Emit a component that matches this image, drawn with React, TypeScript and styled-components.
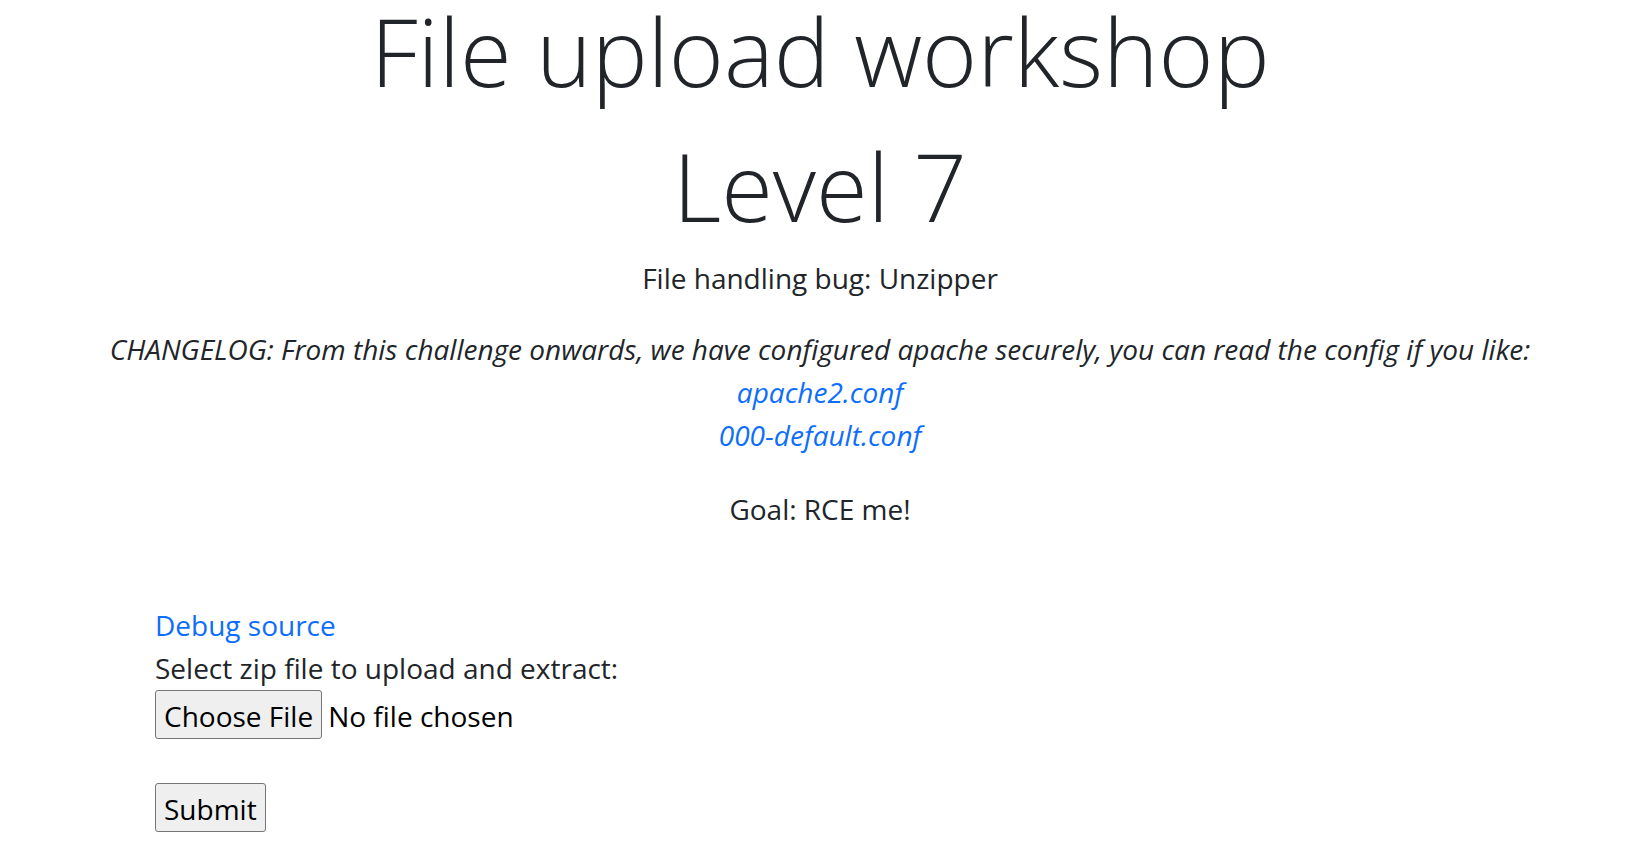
import React from "react";
import styled, { createGlobalStyle } from "styled-components";

const Global = createGlobalStyle`
  html, body { margin: 0; padding: 0; background: #fff; }
  body {
    font-family: "Open Sans", "Noto Sans", sans-serif;
    font-size: 28px;
    line-height: 43px;
    color: #212529;
  }
`;

const Page = styled.main`
  display: flex;
  flex-direction: column;
  padding-top: 4px;
`;

const Header = styled.header`
  display: flex;
  flex-direction: column;
  align-items: center;
  text-align: center;
`;

const Title = styled.h1`
  display: flex;
  flex-direction: column;
  align-items: center;
  gap: 41px;
  margin: 0;
  font-weight: 300;
  font-size: 94px;
  line-height: 94px;
  color: #212529;
`;

const Line = styled.p<{ $top: number }>`
  margin: ${(p) => p.$top}px 0 0;
`;

const Changelog = styled.div`
  display: flex;
  flex-direction: column;
  align-items: center;
  font-style: italic;
  margin-top: 28px;
`;

const Link = styled.a`
  color: #0d6efd;
  text-decoration: none;
`;

const Form = styled.form`
  display: flex;
  flex-direction: column;
  align-items: flex-start;
  padding-left: 155px;
  margin-top: 73px;
`;

const FileRow = styled.div`
  display: flex;
  align-items: baseline;
  gap: 6px;
`;

const NativeButton = styled.button`
  font-family: "Open Sans", "Noto Sans", sans-serif;
  font-size: 28px;
  line-height: 38px;
  color: #000;
  background: #efefef;
  border: 1px solid #767676;
  border-radius: 3px;
  padding: 6px 8px 3px;
  margin: 0;
`;

const FileName = styled.span`
  color: #000;
`;

const SubmitWrap = styled.div`
  margin-top: 44px;
`;

export default function App() {
  return (
    <Page>
      <Global />
      <Header>
        <Title>
          <span>File upload workshop</span>
          <span>Level 7</span>
        </Title>
        <Line $top={24}>File handling bug: Unzipper</Line>
        <Changelog>
          <span>
            CHANGELOG: From this challenge onwards, we have configured apache securely, you can read the config if you like:
          </span>
          <Link href="#">apache2.conf</Link>
          <Link href="#">000-default.conf</Link>
        </Changelog>
        <Line $top={31}>Goal: RCE me!</Line>
      </Header>
      <Form onSubmit={(e) => e.preventDefault()}>
        <Link href="#">Debug source</Link>
        <span>Select zip file to upload and extract:</span>
        <FileRow>
          <NativeButton type="button">Choose File</NativeButton>
          <FileName>No file chosen</FileName>
        </FileRow>
        <SubmitWrap>
          <NativeButton type="submit">Submit</NativeButton>
        </SubmitWrap>
      </Form>
    </Page>
  );
}
